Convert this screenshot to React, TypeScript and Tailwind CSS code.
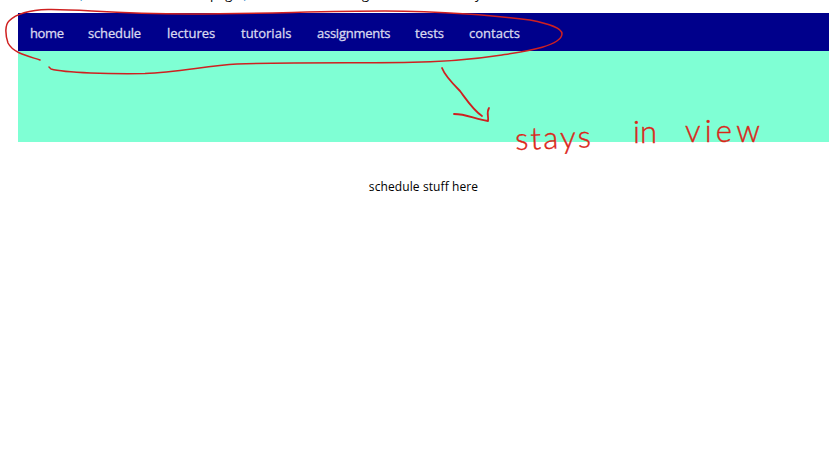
const links = [
  { label: "home", width: "w-[58px]", tracking: "tracking-[-0.4px]" },
  { label: "schedule", width: "w-[79px]", tracking: "tracking-[-0.15px]" },
  { label: "lectures", width: "w-[74px]", tracking: "tracking-normal" },
  { label: "tutorials", width: "w-[76px]", tracking: "tracking-normal" },
  { label: "assignments", width: "w-[98px]", tracking: "tracking-[-0.25px]" },
  { label: "tests", width: "w-[54px]", tracking: "tracking-normal" },
  { label: "contacts", width: "w-[54px]", tracking: "tracking-normal" },
];

function Annotations() {
  return (
    <>
      <svg className="pointer-events-none absolute inset-0" width="829" height="456" viewBox="0 0 829 456" fill="none" stroke="#cf2020" strokeWidth="1.5" strokeLinecap="round" strokeLinejoin="round">
        <path d="M40 60C28 56 13 53 8 43C5 34 5 25 9 21C16 14 27 10 48 9.5C83 9 108 14 190 14C263 14 319 11 385 11C440 11 500 16 530 20C550 24 562 28 562 34C561 46 527 51 502 55C470 60 446 62 404 62.5C350 63 286 62 237 64C207 66 177 72 145 73.5C111 74 65 73 51 69L49 67" />
        <path d="M442 68C445 76 453 84 460 91C466 99 473 110 482 116M454 114C467 114 474 119 488 121C489 117 486 113 489 108" strokeWidth="1.8" />
      </svg>
      <div className="absolute left-[515px] top-[116px] flex h-[40px] whitespace-nowrap font-['Lato',sans-serif] text-[31px] font-light leading-[40px] text-[#dc2518] [-webkit-text-stroke:0.4px_#dc2518]">
        <span className="w-[118px] translate-y-0.5 origin-left rotate-[-2deg] tracking-[2.2px]">stays</span>
        <span className="w-[52px] -translate-y-[5px]">in</span>
        <span className="-translate-y-[6px] tracking-[4.2px]">view</span>
      </div>
    </>
  );
}

export default function App() {
  return (
    <div className="relative h-[456px] w-[829px] overflow-hidden bg-white font-['Open_Sans','Noto_Sans',sans-serif] text-[13px] text-black">
      <div className="flex h-[13px] items-start overflow-hidden pl-[80px] leading-4">
        <span className="-mt-[14px] w-[130px] text-[#2687c8]">,</span>
        <span className="-mt-[14px] w-[152px]">page<span className="ml-1 text-[#2687c8]">,</span></span>
        <span className="-mt-[14px] w-[113px]">g</span>
        <span className="-mt-[14px]">y</span>
      </div>
      <header className="ml-[18px] h-[129px] bg-[#7fffd4]">
        <nav className="flex h-[38px] items-center bg-[#00008b] pl-[12px] pt-px leading-5 text-[#d9d9ef] [-webkit-text-stroke:0.3px_#d9d9ef]">
          {links.map(({ label, width, tracking }) => (
            <a key={label} className={`${width} ${tracking} shrink-0 whitespace-nowrap`}>{label}</a>
          ))}
        </nav>
      </header>
      <main className="pl-[18px] pt-[36px] text-center text-[12px] leading-[18px] tracking-[0.1px]">
        schedule stuff here
      </main>
      <Annotations />
    </div>
  );
}
